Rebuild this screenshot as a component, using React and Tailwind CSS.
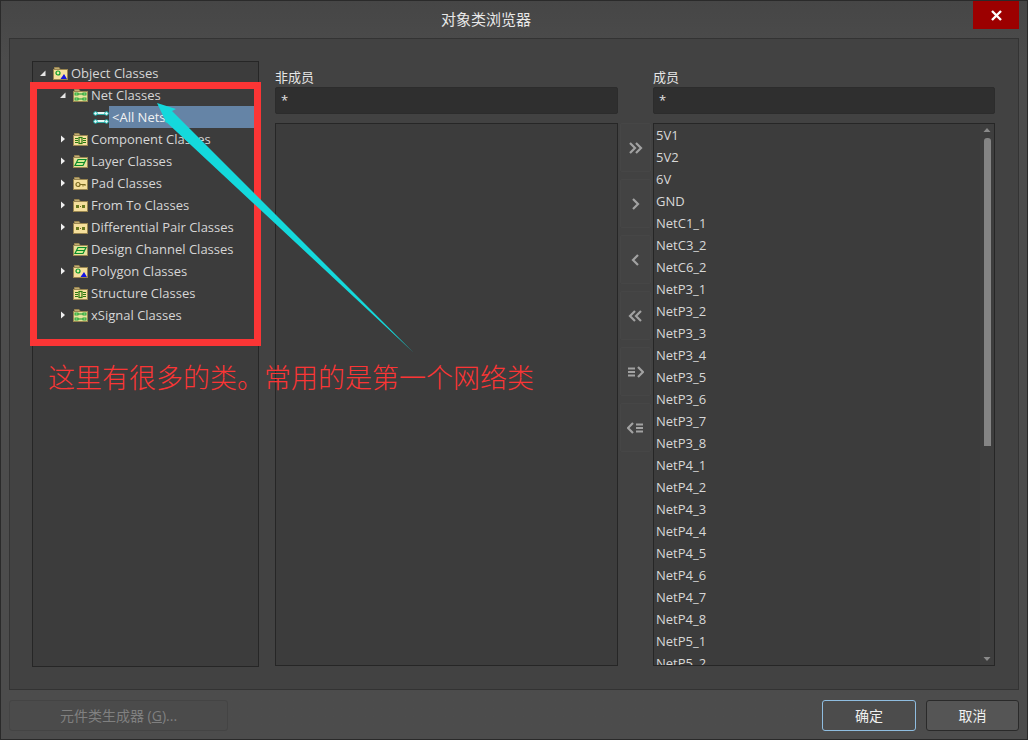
import React from "react";

const uiFont = { fontFamily: '"Open Sans", "Noto Sans CJK SC", sans-serif' };

const treeRows = [
  { label: "Object Classes", level: 0, arrow: "open", icon: "polygon" },
  { label: "Net Classes", level: 1, arrow: "open", icon: "net" },
  { label: "<All Nets>", level: 2, icon: "link", selected: true },
  { label: "Component Classes", level: 1, arrow: "closed", icon: "comp" },
  { label: "Layer Classes", level: 1, arrow: "closed", icon: "layer" },
  { label: "Pad Classes", level: 1, arrow: "closed", icon: "pad" },
  { label: "From To Classes", level: 1, arrow: "closed", icon: "fromto" },
  { label: "Differential Pair Classes", level: 1, arrow: "closed", icon: "fromto" },
  { label: "Design Channel Classes", level: 1, icon: "layer" },
  { label: "Polygon Classes", level: 1, arrow: "closed", icon: "polygon" },
  { label: "Structure Classes", level: 1, icon: "comp" },
  { label: "xSignal Classes", level: 1, arrow: "closed", icon: "net" },
];

const members = [
  "5V1", "5V2", "6V", "GND", "NetC1_1", "NetC3_2", "NetC6_2",
  "NetP3_1", "NetP3_2", "NetP3_3", "NetP3_4", "NetP3_5", "NetP3_6", "NetP3_7", "NetP3_8",
  "NetP4_1", "NetP4_2", "NetP4_3", "NetP4_4", "NetP4_5", "NetP4_6", "NetP4_7", "NetP4_8",
  "NetP5_1", "NetP5_2",
];

const FolderIcon = ({ type }) => {
  const green = type === "net" || type === "layer";
  return (
    <svg width="15" height="15" viewBox="0 0 15 15" className="shrink-0">
      <path d="M1.5 3V1.5h4.5L7 3z" fill="#e8d49a" stroke="#9a8650" strokeWidth="1" />
      <rect x="0.5" y="3.5" width="14" height="10" fill={green ? "#e6e29a" : "#f5df9c"} stroke="#9a8650" />
      {type === "polygon" && (
        <>
          <circle cx="5" cy="7" r="2" fill="#e8f0a0" stroke="#0a9a2a" strokeWidth="1.2" />
          <path d="M7.5 13l3.5-5 3 5z" fill="#1414e0" />
        </>
      )}
      {type === "net" && (
        <>
          <path d="M3 6h9M3 11h9" stroke="#0a9a2a" strokeWidth="1" />
          <rect x="2" y="5" width="3" height="2" fill="#b8e890" stroke="#0a9a2a" strokeWidth="0.8" />
          <rect x="10" y="5" width="3" height="2" fill="#b8e890" stroke="#0a9a2a" strokeWidth="0.8" />
          <rect x="2" y="10" width="3" height="2" fill="#b8e890" stroke="#0a9a2a" strokeWidth="0.8" />
          <rect x="10" y="10" width="3" height="2" fill="#b8e890" stroke="#0a9a2a" strokeWidth="0.8" />
        </>
      )}
      {type === "comp" && (
        <>
          <path d="M2 6.5h3M2 8.5h3M2 10.5h3M10 6.5h3M10 8.5h3M10 10.5h3" stroke="#2a7a10" strokeWidth="1" />
          <rect x="6" y="5.5" width="3" height="6" fill="none" stroke="#2a7a10" strokeWidth="1.2" />
        </>
      )}
      {type === "layer" && (
        <path d="M5 5.5h8l-3 6H2zM3.5 8.5h8" fill="#d4ea90" stroke="#0a8a2a" strokeWidth="1.2" />
      )}
      {type === "pad" && (
        <>
          <circle cx="5" cy="8.5" r="2" fill="none" stroke="#7a6a20" strokeWidth="1.2" />
          <path d="M7 8.5h5.5M10 8.5v2M12 8.5v1.5" stroke="#7a6a20" strokeWidth="1" />
        </>
      )}
      {type === "fromto" && (
        <>
          <path d="M5 8.5h5" stroke="#6a6a20" strokeWidth="1" strokeDasharray="1 1" />
          <rect x="3" y="7" width="3" height="3" fill="#6a7a20" />
          <rect x="9" y="7" width="3" height="3" fill="#6a7a20" />
        </>
      )}
    </svg>
  );
};

const LinkIcon = () => (
  <svg width="16" height="15" viewBox="0 0 16 15" className="shrink-0">
    <path d="M2 3h12M2 11h12" stroke="#e4f6f4" strokeWidth="2" />
    <path d="M2 4.5h12M2 12.5h12" stroke="#2cc4bc" strokeWidth="0.8" />
    <circle cx="2.5" cy="3.5" r="1.8" fill="#eafafa" stroke="#19b8b0" />
    <circle cx="13.5" cy="3.5" r="1.8" fill="#eafafa" stroke="#19b8b0" />
    <circle cx="2.5" cy="11.5" r="1.8" fill="#eafafa" stroke="#19b8b0" />
    <circle cx="13.5" cy="11.5" r="1.8" fill="#eafafa" stroke="#19b8b0" />
  </svg>
);

const TreeArrow = ({ kind }) => (
  <svg width="6" height="8" viewBox="0 0 6 8" className="shrink-0">
    {kind === "open" && <path d="M0 7L5.5 1.5V7z" fill="#e6e6e6" />}
    {kind === "closed" && <path d="M1 0.5L5 4 1 7.5z" fill="#f0f0f0" />}
  </svg>
);

const TreeRow = ({ row }) => (
  <div
    className="flex h-[22px] items-center"
    style={{ paddingLeft: row.level === 2 ? 60 : 7 + row.level * 20 }}
  >
    {row.level < 2 && (
      <>
        <TreeArrow kind={row.arrow} />
        <div className="w-[7px]" />
        <FolderIcon type={row.icon} />
      </>
    )}
    {row.level === 2 && <LinkIcon />}
    <span
      className={`flex h-[22px] grow items-center pt-[2px] text-[13px] whitespace-nowrap ${
        row.level === 2 ? "bg-[#6584a6] pl-[3px] text-[#f2f2f2]" : "pl-[3px] text-[#d6d6d6]"
      }`}
    >
      {row.label}
    </span>
  </div>
);

const FilterColumn = ({ title, className, children }) => (
  <div className={`flex flex-col ${className}`}>
    <label className="h-[26px] pt-[7px] text-[13px] leading-[18px] text-[#e6e6e6]">{title}</label>
    <div className="flex h-[27px] items-center rounded-[2px] border border-[#2c2c2c] bg-[#2f2f2f] pl-[5px] text-[13px] text-[#e2e2e2]">
      *
    </div>
    <div className="mt-[9px] h-[543px] overflow-hidden border border-[#262626] bg-[#3c3c3c]">{children}</div>
  </div>
);

const moveIcons = [
  "M3 3l5 5-5 5M9 3l5 5-5 5",
  "M6 3l5 5-5 5",
  "M11 3L6 8l5 5",
  "M8 3L3 8l5 5M14 3L9 8l5 5",
  "M1 4.5h7M1 8h7M1 11.5h7M11 3l5 5-5 5",
  "M6 3L1 8l5 5M9 4.5h7M9 8h7M9 11.5h7",
];

const MoveButton = ({ d }) => (
  <button className="flex h-[49px] w-[31px] items-center justify-center rounded-[2px] border border-[#464646] bg-[#434343]">
    <svg width="17" height="16" viewBox="0 0 17 16" fill="none" stroke="#a2a2a2" strokeWidth="2.2">
      <path d={d} />
    </svg>
  </button>
);

const Scrollbar = () => (
  <div className="flex h-full w-[14px] shrink-0 flex-col items-center bg-[#3e3e3e]">
    <svg width="8" height="6" viewBox="0 0 8 6" className="mt-[3px] shrink-0">
      <path d="M4 1l3.5 4H.5z" fill="#8a8a8a" />
    </svg>
    <div className="mt-[5px] h-[308px] w-[7px] rounded-t-[3px] bg-[#858585]" />
    <div className="grow" />
    <svg width="8" height="6" viewBox="0 0 8 6" className="mb-[3px] shrink-0">
      <path d="M4 5L.5 1h7z" fill="#8a8a8a" />
    </svg>
  </div>
);

export default function App() {
  return (
    <div
      className="relative flex h-[740px] w-[1028px] flex-col overflow-hidden border border-[#2a2a2a] bg-gradient-to-b from-[#464646] to-[#4c4c4c] to-[8%]"
      style={uiFont}
    >
      {/* title bar */}
      <div className="relative flex h-[37px] shrink-0 items-center justify-center pr-[56px] text-[15px] text-[#e8e8e8]">
        对象类浏览器
        <button className="absolute top-0 right-[8px] flex h-[28px] w-[46px] items-center justify-center bg-[#9c0000]">
          <svg width="11" height="11" viewBox="0 0 11 11" stroke="#ffffff" strokeWidth="2.4">
            <path d="M1 1l9 9M10 1L1 10" />
          </svg>
        </button>
      </div>

      {/* main panel */}
      <div className="mx-[8px] flex h-[652px] shrink-0 border border-[#333333] bg-[#424242] pt-[22px] pl-[22px]">
        <div className="h-[606px] w-[227px] shrink-0 overflow-hidden border border-[#262626] bg-[#3c3c3c]">
          {treeRows.map((row) => (
            <TreeRow key={row.label} row={row} />
          ))}
        </div>

        <FilterColumn title="非成员" className="ml-[16px] w-[343px]" />

        <div className="mt-[62px] ml-[2px] flex w-[31px] shrink-0 flex-col gap-[7px]">
          {moveIcons.map((d) => (
            <MoveButton key={d} d={d} />
          ))}
        </div>

        <FilterColumn title="成员" className="ml-[2px] w-[342px]">
          <div className="flex h-full">
            <div className="grow overflow-hidden">
              {members.map((name) => (
                <div key={name} className="flex h-[22px] items-center pt-[2px] pl-[2px] text-[13px] text-[#d8d8d8]">
                  {name}
                </div>
              ))}
            </div>
            <Scrollbar />
          </div>
        </FilterColumn>
      </div>

      {/* footer */}
      <div className="flex grow items-start justify-between px-[8px] pt-[10px]">
        <button className="flex h-[31px] w-[219px] items-center justify-center rounded-[3px] border border-[#444444] bg-[#4b4b4b] text-[14px] text-[#808080]">
          元件类生成器 (<span className="underline">G</span>)...
        </button>
        <div className="flex gap-[10px]">
          <button className="h-[31px] w-[94px] rounded-[3px] border border-[#8fbde0] bg-[#4c4c4c] text-[14px] text-[#f0f0f0]">
            确定
          </button>
          <button className="h-[31px] w-[93px] rounded-[3px] border border-[#2a2a2a] bg-[#555555] text-[14px] text-[#f0f0f0]">
            取消
          </button>
        </div>
      </div>

      {/* annotation drawn over the screenshot */}
      <div className="absolute top-[81px] left-[29px] h-[264px] w-[231px] border-[7px] border-[#fb3535]" />
      <svg width="1028" height="740" className="pointer-events-none absolute -top-px -left-px">
        <path d="M157 103L176 109 172 111 413 352 163 119 167 124z" fill="#14d9dc" />
      </svg>
      <div
        className="absolute top-[358px] left-[47px] text-[27px] leading-[36px] whitespace-nowrap text-[#fb3535]"
        style={{ fontFamily: '"Noto Sans CJK SC", sans-serif', fontWeight: 300 }}
      >
        这里有很多的类。常用的是第一个网络类
      </div>
    </div>
  );
}
